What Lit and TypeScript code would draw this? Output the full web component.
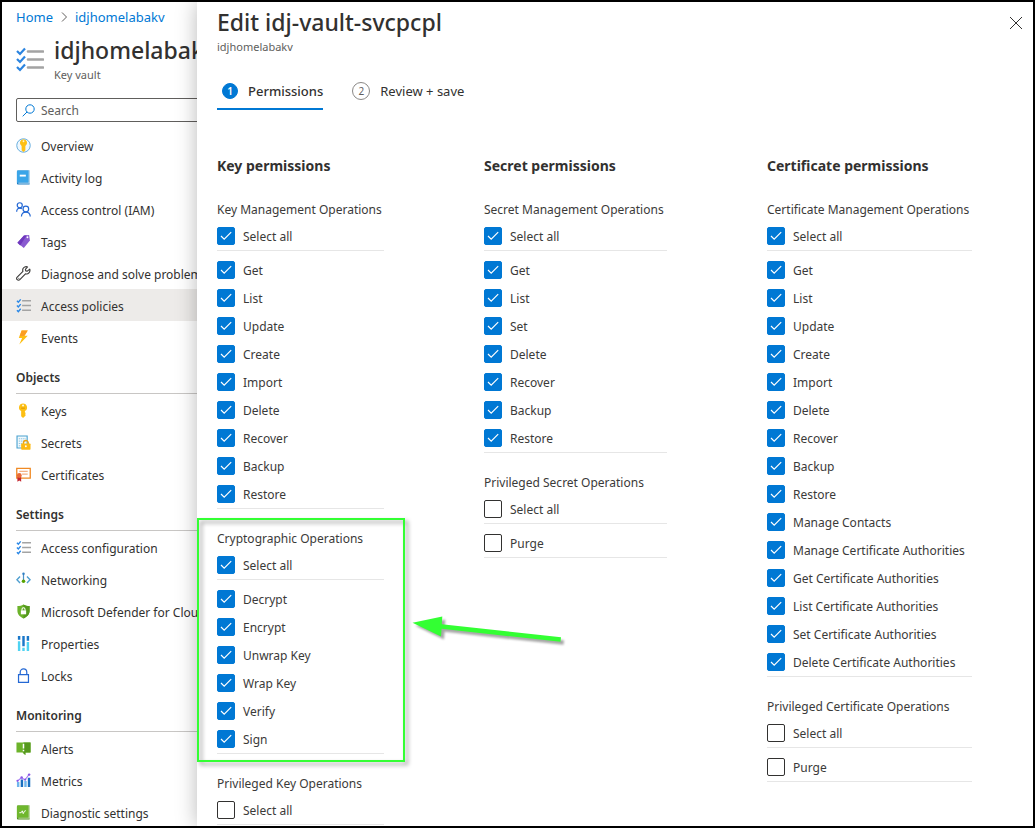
import { LitElement, html, svg, css, nothing, TemplateResult } from "lit";
import { customElement, property } from "lit/decorators.js";
import { classMap } from "lit/directives/class-map.js";

const checklist = svg`
  <path d="M1 3l1.500 1.500L5 1.500M1 8l1.500 1.500L5 6.500M1 13l1.500 1.500L5 11.500" fill="none" stroke="#2b88e6" stroke-width="1.500"/>
  <path d="M6.500 3H16M6.500 8H16M6.500 13H16" stroke="#a3a3a3" stroke-width="1.500"/>`;

const icons: Record<string, TemplateResult> = {
  overview: svg`
    <circle cx="8" cy="8" r="7.200" fill="#eef7fd" stroke="#5ea9dc" stroke-width="1"/>
    <path d="M8 1.200a3.900 3.900 0 0 1 2 7.200V13L8 14.800 6 13V8.400a3.900 3.900 0 0 1 2-7.200z" fill="#fdbf13"/>
    <circle cx="8" cy="3.400" r="1" fill="#fff3c4"/>`,
  log: svg`
    <path d="M1 1.500A1 1 0 0 1 2 .5h12.500v15H2a1 1 0 0 1-1-1z" fill="#1f7fc4"/>
    <path d="M1 1.500A1 1 0 0 1 2 .5h11.500v13H1z" fill="#3aa5e8"/>
    <path d="M13.500 .5h1v14H2.500v-1h11z" fill="#d9eefa"/>
    <path d="M4 5h6.500v2H4z" fill="#fff"/>`,
  people: svg`
    <g fill="none" stroke="#2468d4" stroke-width="1.300">
      <circle cx="4" cy="3.500" r="2.700"/><path d="M.7 10.500C.7 8 2 6.500 4 6.500c1 0 1.700.3 2.300.8"/>
      <circle cx="10.500" cy="7.500" r="3"/><path d="M5.800 15.500c0-3 2-4.800 4.700-4.800s4.700 1.800 4.700 4.800"/>
    </g>`,
  tag: svg`
    <path d="M8.500 1.500L14 1l.8 6-6.500 8L1.500 9.200z" fill="#8a5bd0"/>
    <path d="M8.500 1.500l3-.3-7 11L1.500 9.200z" fill="#6f38bd"/>
    <circle cx="12.200" cy="3.500" r="1" fill="#fff"/>`,
  wrench: svg`
    <path d="M14.700 3.300l-2.600 2.200-1.700-.3-.4-1.700 2.300-2.500c-2-.8-4.300.2-4.900 2-.4 1.100-.3 1.900 0 2.700L1.300 11.800c-.9.900-.9 2 0 2.800.8.800 1.900.8 2.800-.1l6-6.200c2.800 1 5.500-1.800 4.600-5z" fill="none" stroke="#3b3a39" stroke-width="1.200" stroke-linejoin="round"/>
    <circle cx="3" cy="13" r=".6" fill="#3b3a39"/>`,
  checklist,
  bolt: svg`
    <path d="M6 .5h6.500L9 6h3.500L3.500 15.500 6.500 8.500H3z" fill="#fdbf13"/>
    <path d="M6 .5h6.500L9 6 3.800 7z" fill="#fb9d23"/>`,
  key: svg`
    <path d="M7.500.5a4.300 4.300 0 0 1 2 8.100v1.200l1 1-1 1 1 1-1 1.200-2 2-2-2V8.600a4.300 4.300 0 0 1 2-8.100z" fill="#fdbf13"/>
    <path d="M5.500 5.500h4" stroke="#dc9200" stroke-width="1"/>
    <circle cx="7.500" cy="2.600" r="1.100" fill="#fff8dc"/>`,
  secret: svg`
    <path d="M1.100 1.100h10.800v12.800H1.100z" fill="#f3fafd" stroke="#4aa2d0" stroke-width="1.200"/>
    <path d="M3 4h7.500M3 6.500h7.500M3 9h4M3 11.500h3" stroke="#85c1e0" stroke-width="1" stroke-dasharray="1.500 .8"/>
    <path d="M8 9.500V8.300a2.500 2.500 0 0 1 5 0v1.200" fill="none" stroke="#f0a30a" stroke-width="1.500"/>
    <rect x="5.500" y="9" width="10" height="6.700" rx=".8" fill="#fdb913"/>
    <circle cx="10.500" cy="12" r="1" fill="#fff"/>`,
  certificate: svg`
    <path d="M.8 1.500h14.400v10.300H.8z" fill="#fff" stroke="#f08a24" stroke-width="1.400"/>
    <path d="M3.500 4.700h9M6.500 7.500h6" stroke="#f4b183" stroke-width="1.300"/>
    <path d="M1.500 10h4v5.800l-2-1.300-2 1.300z" fill="#c4262e"/>
    <circle cx="3.500" cy="9" r="2.600" fill="#ea6a35"/>`,
  network: svg`
    <path d="M4.300 4.800L1 8.300l3.300 3.500M11.700 4.800L15 8.300l-3.300 3.500" fill="none" stroke="#4f9fd0" stroke-width="1.500"/>
    <path d="M8 2v8" stroke="#4a90c8" stroke-width="1.300"/>
    <circle cx="8" cy="1.800" r="1.300" fill="#2f7fc4"/><circle cx="8" cy="9.800" r="1.900" fill="#57a300"/>`,
  shield: svg`
    <path d="M8 .5c2 1.300 3.800 1.600 6.500 1.600v5.400c0 4-3.500 6.500-6.500 8-3-1.500-6.500-4-6.500-8V2.100C4.200 2.100 6 1.800 8 .5z" fill="#6cb32a"/>
    <path d="M8 .5c2 1.300 3.800 1.600 6.500 1.600v5.400c0 4-3.500 6.500-6.500 8z" fill="#559a1c"/>
    <path d="M6.400 7V5.600a1.600 1.600 0 0 1 3.200 0V7" fill="none" stroke="#fff" stroke-width="1.100"/>
    <rect x="5.200" y="6.800" width="5.600" height="4.200" fill="#fff"/>`,
  properties: svg`
    <path d="M2 0h2.600v4H2zM6.700 0h2.600v11H6.700zM11.400 0H14v5h-2.600z" fill="#1977c9"/>
    <path d="M2 5.500h2.600V16H2zM6.700 12.500h2.600V16H6.700zM11.400 6.500H14V16h-2.600z" fill="#4fd3f2"/>`,
  lock: svg`
    <path d="M4.500 7V4.500a3.500 3.500 0 0 1 7 0V7M2.700 7h10.600v8.300H2.700z" fill="none" stroke="#2468d4" stroke-width="1.300"/>`,
  alerts: svg`
    <path d="M.5 1.500h15v10.800H10V15l-3-2.700H.5z" fill="#6cb32a"/>
    <path d="M8 1.500h7.500v10.800H10V15l-2-1.800z" fill="#56991d"/>
    <path d="M7.200 3h1.600v5H7.200zM7.200 9.200h1.600v1.600H7.200z" fill="#fff"/>`,
  metrics: svg`
    <path d="M1 9.500h2.600V15H1zM8.800 8.500h2.600V15H8.800z" fill="#6fb5ec"/>
    <path d="M5 7h2.600v8H5zM12.600 5h2.600v10h-2.600z" fill="#1b6fc0"/>
    <path d="M1.500 8.500L6 5l3.500 2.500L14 1.500" fill="none" stroke="#a67af4" stroke-width="1.100"/>
    <g fill="#8a55e6"><circle cx="1.600" cy="8.300" r="1.200"/><circle cx="6" cy="4.800" r="1.300"/><circle cx="9.800" cy="7" r="1.200"/><circle cx="14" cy="1.700" r="1.300"/></g>`,
  diagnostic: svg`
    <path d="M1 1.500a1 1 0 0 1 1-1h12.500v15H2a1 1 0 0 1-1-1z" fill="#4f8f1b"/>
    <path d="M1 1.500a1 1 0 0 1 1-1h11.500v13H1z" fill="#6fb72d"/>
    <path d="M13.500 .5h1v14H2.500v-1h11z" fill="#dcefc8"/>
    <path d="M3.500 8.200h2l1.200-2 1 3 1.200-2.500 1.600-.7" fill="none" stroke="#fff" stroke-width="1"/>`,
};

interface NavItem { label: string; icon: string; current?: boolean }
interface NavSection { title?: string; items: NavItem[] }

const sections: NavSection[] = [
  {
    items: [
      { label: "Overview", icon: "overview" },
      { label: "Activity log", icon: "log" },
      { label: "Access control (IAM)", icon: "people" },
      { label: "Tags", icon: "tag" },
      { label: "Diagnose and solve problems", icon: "wrench" },
      { label: "Access policies", icon: "checklist", current: true },
      { label: "Events", icon: "bolt" },
    ],
  },
  {
    title: "Objects",
    items: [
      { label: "Keys", icon: "key" },
      { label: "Secrets", icon: "secret" },
      { label: "Certificates", icon: "certificate" },
    ],
  },
  {
    title: "Settings",
    items: [
      { label: "Access configuration", icon: "checklist" },
      { label: "Networking", icon: "network" },
      { label: "Microsoft Defender for Cloud", icon: "shield" },
      { label: "Properties", icon: "properties" },
      { label: "Locks", icon: "lock" },
    ],
  },
  {
    title: "Monitoring",
    items: [
      { label: "Alerts", icon: "alerts" },
      { label: "Metrics", icon: "metrics" },
      { label: "Diagnostic settings", icon: "diagnostic" },
    ],
  },
];

interface Group { title: string; granted: boolean; items: string[]; highlight?: boolean }
interface Column { title: string; groups: Group[] }

const columns: Column[] = [
  {
    title: "Key permissions",
    groups: [
      { title: "Key Management Operations", granted: true, items: ["Get", "List", "Update", "Create", "Import", "Delete", "Recover", "Backup", "Restore"] },
      { title: "Cryptographic Operations", granted: true, highlight: true, items: ["Decrypt", "Encrypt", "Unwrap Key", "Wrap Key", "Verify", "Sign"] },
      { title: "Privileged Key Operations", granted: false, items: ["Purge", "Release"] },
    ],
  },
  {
    title: "Secret permissions",
    groups: [
      { title: "Secret Management Operations", granted: true, items: ["Get", "List", "Set", "Delete", "Recover", "Backup", "Restore"] },
      { title: "Privileged Secret Operations", granted: false, items: ["Purge"] },
    ],
  },
  {
    title: "Certificate permissions",
    groups: [
      {
        title: "Certificate Management Operations", granted: true,
        items: ["Get", "List", "Update", "Create", "Import", "Delete", "Recover", "Backup", "Restore", "Manage Contacts",
          "Manage Certificate Authorities", "Get Certificate Authorities", "List Certificate Authorities",
          "Set Certificate Authorities", "Delete Certificate Authorities"],
      },
      { title: "Privileged Certificate Operations", granted: false, items: ["Purge"] },
    ],
  },
];

@customElement("vault-sidebar")
class VaultSidebar extends LitElement {
  static styles = css`
    :host { display: block; overflow: hidden; background: #fff; color: #323130; }
    .inner { width: 250px; }
    .crumbs { display: flex; align-items: center; gap: 8px; padding: 5px 0 0 14px; font-size: 13px; line-height: 20px; }
    a { color: #0078d4; text-decoration: none; white-space: nowrap; }
    .crumbs svg { width: 6px; height: 10px; }
    .head { display: flex; gap: 10px; padding: 7px 0 0 14px; }
    .head svg { width: 28px; height: 28px; margin-top: 11px; flex: none; }
    h1 { margin: 0; font-size: 23px; line-height: 32px; font-weight: 500; }
    .kind { margin-top: 1px; font-size: 11px; line-height: 16px; color: #605e5c; }
    .search { display: flex; align-items: center; gap: 6px; height: 22px; margin: 15px 0 7px 14px; padding-left: 5px; border: 1px solid #605e5c; border-radius: 2px; }
    .search svg { width: 13px; height: 13px; flex: none; }
    .search input { flex: 1; min-width: 0; border: 0; padding: 2px 0 0; outline: 0; background: none; font: inherit; color: inherit; }
    .search input::placeholder { color: #605e5c; opacity: 1; }
    ul { list-style: none; margin: 0; padding: 0; }
    .item { display: flex; align-items: center; gap: 10px; height: 32px; padding-left: 14px; color: #323130; }
    .item svg { width: 15px; height: 15px; flex: none; }
    .item span { padding-top: 4px; }
    .current { background: #edebe9; }
    h2 { margin: 0 0 0 14px; padding: 15px 0 5px; border-bottom: 1px solid #c8c6c4; font-size: 12px; line-height: 20px; font-weight: 600; }
  `;

  render() {
    return html`<div class="inner">
      <nav class="crumbs" aria-label="Breadcrumb">
        <a href="#home">Home</a>
        <svg viewBox="0 0 6 10"><path d="M1 .5L5.500 5 1 9.500" fill="none" stroke="#605e5c"/></svg>
        <a href="#vault">idjhomelabakv</a>
      </nav>
      <div class="head">
        <svg viewBox="0 0 28 28">
          <path d="M1 6l3 3 5-5.500M1 14l3 3 5-5.500M1 22l3 3 5-5.500" fill="none" stroke="#2b84e0" stroke-width="2.200"/>
          <path d="M12 6.500h15M12 14.500h15M12 22.500h15" stroke="#a3a3a3" stroke-width="2.600" stroke-linecap="round"/>
        </svg>
        <div><h1>idjhomelabakv</h1><div class="kind">Key vault</div></div>
      </div>
      <label class="search">
        <svg viewBox="0 0 13 13"><circle cx="8" cy="5" r="4.200" fill="none" stroke="#0078d4"/><path d="M5 8L.7 12.300" stroke="#0078d4"/></svg>
        <input type="search" placeholder="Search" aria-label="Search">
      </label>
      <nav aria-label="Key vault">
        ${sections.map((s) => html`
          ${s.title ? html`<h2>${s.title}</h2>` : nothing}
          <ul>${s.items.map((i) => html`<li>
            <a class=${classMap({ item: true, current: !!i.current })} href="#" aria-current=${i.current ? "page" : nothing}>
              <svg viewBox="0 0 16 16">${icons[i.icon]}</svg><span>${i.label}</span></a></li>`)}</ul>`)}
      </nav>
    </div>`;
  }
}

@customElement("permission-group")
class PermissionGroup extends LitElement {
  @property({ attribute: false }) group!: Group;

  static styles = css`
    :host { display: block; position: relative; color: #3b3a39; }
    fieldset { margin: 0; padding: 0; border: 0; min-width: 0; }
    legend { padding: 1px 0 2px; line-height: 20px; white-space: nowrap; }
    .row { display: flex; align-items: center; gap: 8px; height: 28px; white-space: nowrap; }
    .row span { padding-top: 2px; }
    .all { border-bottom: 1px solid #e6e6e6; margin-bottom: 5px; }
    .list { border-bottom: 1px solid #e6e6e6; }
    input { appearance: none; box-sizing: border-box; width: 18px; height: 18px; margin: 0; border: 1px solid #323130; border-radius: 2px; background: #fff; flex: none; }
    input:checked {
      border-color: #0078d4;
      background: #0078d4 url("data:image/svg+xml,%3Csvg xmlns='http://www.w3.org/2000/svg' viewBox='0 0 16 16'%3E%3Cpath d='M3 8l3.200 3.200 7-7' fill='none' stroke='white' stroke-width='1.200'/%3E%3C/svg%3E") center / 16px 16px no-repeat;
    }
    .box { position: absolute; inset: -10px -21px -8px -20px; border: 2px solid #33ff33; filter: drop-shadow(3px 3px 2px rgba(0, 0, 0, 0.4)); pointer-events: none; }
    .arrow { position: absolute; left: 190px; top: 80px; width: 170px; height: 50px; filter: drop-shadow(3px 3px 1px rgba(0, 0, 0, 0.35)); pointer-events: none; }
  `;

  private row(label: string, extra = "") {
    return html`<label class="row ${extra}"><input type="checkbox" ?checked=${this.group.granted}><span>${label}</span></label>`;
  }

  render() {
    const g = this.group;
    return html`
      <fieldset>
        <legend>${g.title}</legend>
        ${this.row("Select all", "all")}
        <div class="list">${g.items.map((i) => this.row(i))}</div>
      </fieldset>
      ${g.highlight ? html`
        <div class="box"></div>
        <svg class="arrow" viewBox="0 0 170 50"><path d="M5.500 14.700L35.300 8.500 34.800 16.200 154 29.200 153.500 33.800 34.600 20.800 34 28.500z" fill="#33ff33"/></svg>` : nothing}`;
  }
}

@customElement("edit-panel")
class EditPanel extends LitElement {
  static styles = css`
    :host { display: block; overflow: hidden; position: relative; background: #fff; color: #323130; }
    header { display: flex; justify-content: space-between; align-items: flex-start; padding: 4px 9px 0 20px; }
    h1 { margin: 0; font-size: 23px; line-height: 32px; font-weight: 500; }
    .sub { margin-top: 1px; font-size: 11px; line-height: 16px; color: #605e5c; }
    .close { display: flex; padding: 11px 2px; border: 0; background: none; }
    .close svg { width: 12px; height: 12px; }
    .tabs { display: flex; gap: 29px; padding: 18px 20px 0; }
    .tab { display: flex; align-items: center; gap: 10px; height: 37px; padding: 0; border: 0; border-bottom: 2px solid transparent; background: none; font: inherit; font-size: 13px; color: inherit; white-space: nowrap; }
    .num { display: flex; align-items: center; justify-content: center; box-sizing: border-box; width: 18px; height: 18px; border: 1px solid #8a8886; border-radius: 50%; font-size: 10px; color: #605e5c; }
    .active { border-bottom-color: #0078d4; font-weight: 500; padding-left: 5px; }
    .active .num { width: 16px; height: 16px; border-color: #0078d4; background: #0078d4; color: #fff; font-weight: 600; }
    .columns { display: grid; grid-template-columns: 167px 183px 205px; gap: 100px; padding: 44px 20px 0; }
    h2 { margin: 0 0 21px; font-size: 14px; line-height: 24px; font-weight: 700; white-space: nowrap; }
    .groups { display: flex; flex-direction: column; gap: 19px; }
  `;

  render() {
    return html`
      <header>
        <div><h1>Edit idj-vault-svcpcpl</h1><div class="sub">idjhomelabakv</div></div>
        <button class="close" aria-label="Close"><svg viewBox="0 0 12 12"><path d="M0 0l12 12M12 0L0 12" stroke="#323130"/></svg></button>
      </header>
      <div class="tabs" role="tablist">
        <button class="tab active" role="tab" aria-selected="true"><span class="num">1</span>Permissions</button>
        <button class="tab" role="tab" aria-selected="false"><span class="num">2</span>Review + save</button>
      </div>
      <div class="columns">
        ${columns.map((c) => html`<section>
          <h2>${c.title}</h2>
          <div class="groups">${c.groups.map((g) => html`<permission-group .group=${g}></permission-group>`)}</div>
        </section>`)}
      </div>`;
  }
}

@customElement("app-root")
class AppRoot extends LitElement {
  static styles = css`
    :host { display: grid; grid-template-columns: 195px minmax(0, 1fr); box-sizing: border-box; height: 100vh; overflow: hidden; border: 2px solid #000; font: 12px/20px "Noto Sans", "Open Sans", sans-serif; }
    .side, .panel { min-height: 0; }
    .panel { box-shadow: 0 0 20px rgba(0, 0, 0, 0.28); }
  `;

  render() {
    return html`<vault-sidebar class="side"></vault-sidebar><edit-panel class="panel"></edit-panel>`;
  }
}
